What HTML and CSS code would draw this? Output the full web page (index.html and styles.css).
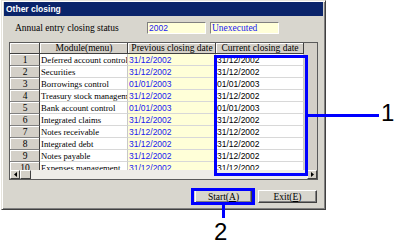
FILE: index.html
```html
<!DOCTYPE html>
<html>
<head>
<meta charset="utf-8">
<link rel="stylesheet" href="styles.css">
</head>
<body>
<div class="window">
  <div class="titlebar">Other closing</div>
  <div class="status-row">
    <span class="label">Annual entry closing status</span>
    <span class="field year">2002</span>
    <span class="field state">Unexecuted</span>
  </div>
  <div class="grid">
    <div class="grid-body">
      <div class="row head">
        <div class="c num"></div>
        <div class="c mod">Module(menu)</div>
        <div class="c prev">Previous closing date</div>
        <div class="c cur">Current closing date</div>
      </div>
      <div class="row"><div class="c num">1</div><div class="c mod">Deferred account control</div><div class="c prev">31/12/2002</div><div class="c cur">31/12/2002</div></div>
      <div class="row"><div class="c num">2</div><div class="c mod">Securities</div><div class="c prev">31/12/2002</div><div class="c cur">31/12/2002</div></div>
      <div class="row"><div class="c num">3</div><div class="c mod">Borrowings control</div><div class="c prev">01/01/2003</div><div class="c cur">01/01/2003</div></div>
      <div class="row"><div class="c num">4</div><div class="c mod">Treasury stock management</div><div class="c prev">31/12/2002</div><div class="c cur">31/12/2002</div></div>
      <div class="row"><div class="c num">5</div><div class="c mod">Bank account control</div><div class="c prev">01/01/2003</div><div class="c cur">01/01/2003</div></div>
      <div class="row"><div class="c num">6</div><div class="c mod">Integrated claims</div><div class="c prev">31/12/2002</div><div class="c cur">31/12/2002</div></div>
      <div class="row"><div class="c num">7</div><div class="c mod">Notes receivable</div><div class="c prev">31/12/2002</div><div class="c cur">31/12/2002</div></div>
      <div class="row"><div class="c num">8</div><div class="c mod">Integrated debt</div><div class="c prev">31/12/2002</div><div class="c cur">31/12/2002</div></div>
      <div class="row"><div class="c num">9</div><div class="c mod">Notes payable</div><div class="c prev">31/12/2002</div><div class="c cur">31/12/2002</div></div>
      <div class="row"><div class="c num">10</div><div class="c mod">Expenses management</div><div class="c prev">31/12/2002</div><div class="c cur">31/12/2002</div></div>
    </div>
    <div class="hscroll">
      <div class="sbtn"><svg width="3" height="5" viewBox="0 0 3 5"><path d="M3 0 L0 2.5 L3 5 Z" fill="#000"/></svg></div>
      <div class="thumb"></div>
      <div class="track"></div>
      <div class="sbtn"><svg width="3" height="5" viewBox="0 0 3 5"><path d="M0 0 L3 2.5 L0 5 Z" fill="#000"/></svg></div>
    </div>
  </div>
  <div class="buttons">
    <button class="btn start">Start(<u>A</u>)</button>
    <button class="btn exit">Exit(<u>E</u>)</button>
  </div>
</div>

<div class="hl hl-col"></div>
<div class="hl-line line1"></div>
<div class="callout n1">1</div>
<div class="hl hl-btn"></div>
<div class="hl-line line2"></div>
<div class="callout n2">2</div>
</body>
</html>
```

FILE: styles.css
```css
html, body {
  margin: 0;
  padding: 0;
  background: #ffffff;
}
body {
  position: relative;
  width: 414px;
  height: 250px;
  overflow: hidden;
  font-family: "Liberation Serif", serif;
  font-size: 9px;
  color: #000;
}
.window {
  margin-left: 1px;
  width: 325px;
  height: 210px;
  box-sizing: border-box;
  background: #d8d6ce;
  border: 1px solid;
  border-color: #e6e4dc #404040 #404040 #e6e4dc;
  box-shadow: inset 1px 1px #ffffff, inset -1px -1px #808080;
  padding: 1px 2px 2px 2px;
  display: flex;
  flex-direction: column;
}
.titlebar {
  height: 14px;
  background: #0a246a;
  color: #fff;
  font-family: "Liberation Sans", sans-serif;
  font-weight: bold;
  font-size: 8.5px;
  line-height: 14px;
  padding-left: 2px;
}
.status-row {
  margin-top: 6px;
  height: 12px;
  display: flex;
  align-items: center;
  padding-left: 11px;
}
.label {
  width: 132px;
  font-size: 9.5px;
}
.field {
  height: 12px;
  box-sizing: border-box;
  background: #ffffd8;
  border: 1px solid;
  border-color: #808080 #ffffff #ffffff #808080;
  color: #2020f0;
  line-height: 10px;
  padding-left: 1px;
  font-size: 9.5px;
}
.field.year { width: 59px; font-family: "Liberation Sans", sans-serif; font-size: 8.5px; }
.field.state { width: 69px; margin-left: 4px; }
.grid {
  margin-top: 8px;
  margin-left: 5px;
  width: 309px;
  height: 138px;
  box-sizing: border-box;
  border: 1px solid #5a5a5a;
  background: #d4d0c8;
  display: flex;
  flex-direction: column;
}
.grid-body {
  height: 127px;
  overflow: hidden;
}
.row {
  display: flex;
  height: 12px;
}
.row.head { height: 11px; }
.c {
  box-sizing: border-box;
  height: 100%;
  overflow: hidden;
  white-space: nowrap;
  border-right: 1px solid #c8c8c8;
  border-bottom: 1px solid #d8d8d8;
  line-height: 11px;
  padding-top: 1px;
  font-size: 8.7px;
  padding-left: 1px;
}
.c.num { width: 30px; text-align: center; background: #d4d0c8; border-right: 1px solid #404040; border-bottom: 1px solid #808080; box-shadow: inset 1px 1px #fff; font-size: 9.5px; }
.c.mod { width: 88px; background: #fff; }
.c.prev { width: 88px; background: #ffffd8; color: #2020f0; font-family: "Liberation Sans", sans-serif; font-size: 8.5px; }
.c.cur { width: 88px; background: #fff; font-family: "Liberation Sans", sans-serif; font-size: 8.5px; }
.head .c {
  background: #d4d0c8;
  color: #000;
  text-align: center;
  font-family: "Liberation Serif", serif;
  font-size: 9.5px;
  border-right: 1px solid #404040;
  border-bottom: 1px solid #404040;
  box-shadow: inset 1px 1px #fff;
  line-height: 10px;
  padding-top: 0;
}
.hscroll {
  height: 9px;
  display: flex;
  background: #eeede8;
}
.sbtn {
  width: 10px;
  height: 9px;
  box-sizing: border-box;
  background: #d4d0c8;
  border: 1px solid;
  border-color: #ffffff #404040 #404040 #ffffff;
  display: flex;
  align-items: center;
  justify-content: center;
}
.thumb {
  width: 11px;
  height: 9px;
  box-sizing: border-box;
  background: #d4d0c8;
  border: 1px solid;
  border-color: #ffffff #404040 #404040 #ffffff;
}
.track { flex: 1; }
.buttons {
  margin-top: 10px;
  display: flex;
  justify-content: flex-end;
  gap: 6px;
  padding-right: 6px;
}
.btn {
  height: 13px;
  box-sizing: border-box;
  background: #d8d6ce;
  border: 1px solid;
  border-color: #ffffff #404040 #404040 #ffffff;
  box-shadow: inset -1px -1px #808080;
  font-family: "Liberation Serif", serif;
  font-size: 9.5px;
  line-height: 10px;
  padding: 0;
  color: #000;
}
.btn.start { width: 57px; }
.btn.exit { width: 59px; }

.hl {
  position: absolute;
  border: 3px solid #0000ff;
  box-sizing: border-box;
}
.hl-col { left: 214px; top: 55px; width: 94px; height: 121px; }
.hl-btn { left: 191px; top: 188px; width: 64px; height: 17px; }
.hl-line { position: absolute; background: #0000ff; }
.line1 { left: 308px; top: 114px; width: 71px; height: 3px; }
.line2 { left: 222px; top: 205px; width: 3px; height: 13px; }
.callout {
  position: absolute;
  font-family: "Liberation Sans", sans-serif;
  font-size: 24px;
  line-height: 1;
  color: #000;
}
.n1 { left: 381px; top: 101px; }
.n2 { left: 214px; top: 220px; }
```
